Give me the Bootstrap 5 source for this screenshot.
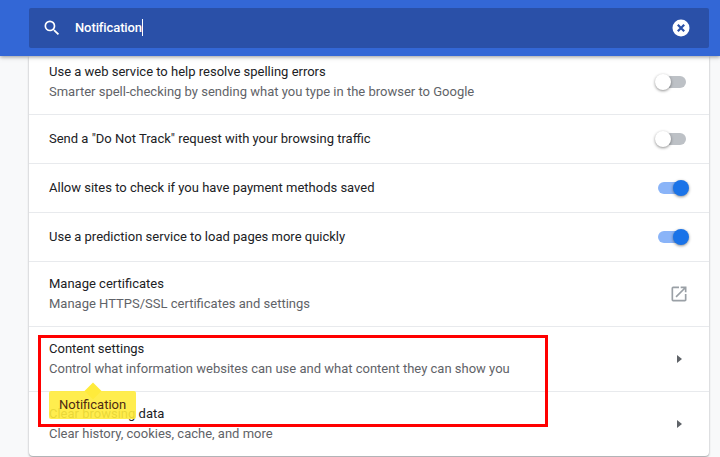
<!DOCTYPE html>
<html lang="en">
<head>
<meta charset="utf-8">
<title>Settings</title>
<link href="https://cdn.jsdelivr.net/npm/bootstrap@5.3.0/dist/css/bootstrap.min.css" rel="stylesheet">
<style>
html,body{height:457px;overflow:hidden}
body{background:#f8f9fa;font-family:Roboto,"Liberation Sans",sans-serif;font-size:13px;line-height:20px;color:#202124;position:relative}
.top-bar{height:56px;background:#3367d6;padding:8px 11px 8px 29px;box-shadow:0 1px 4px rgba(60,64,67,.55);position:relative;z-index:2}
.search-box{height:40px;background:#2a50a8;border-radius:2px;padding:0 19px 0 13px;color:#fff;font-weight:500}
.search-val{margin-left:13px;line-height:20px;letter-spacing:-.1px}
.caret-line{display:inline-block;width:1px;height:17px;background:#fff;vertical-align:-4px}
.panel{margin:0 11px 0 29px;height:400px;background:#fff;border-radius:0 0 4px 4px;box-shadow:0 1px 2px rgba(60,64,67,.5)}
.set-row{height:49px;padding:0 20px;border-bottom:1px solid #e8eaed}
.set-row.two{height:65px}
.set-row.first{height:59px;padding-bottom:7px;padding-top:0}
.set-row.last{border-bottom:0;height:64px}
.set-sub{color:#5f6368}
.tog{width:29px;height:12px;position:relative;margin-right:3px;border-radius:6px;background:#bdc1c6}
.tog::after{content:"";position:absolute;top:-2px;left:-2px;width:16px;height:16px;border-radius:50%;background:#fff;box-shadow:0 1px 3px rgba(0,0,0,.45)}
.tog.on{background:#8ab4f8;margin-right:2px}
.tog.on::after{left:15px;background:#1a73e8}
.act{width:20px;height:20px}
.red-frame{position:absolute;left:38px;top:335px;width:510px;height:92px;border:3px solid #f00;z-index:3}
.tip{position:absolute;left:49px;top:391px;width:87px;height:28px;background:rgba(255,235,59,.9);border-radius:2px;color:#4d2a12;padding:4px 0 0 10px;z-index:4}
.tip::before{content:"";position:absolute;left:38px;top:-6px;width:12px;height:12px;background:#ffeb3b;transform:rotate(45deg);z-index:-1}
</style>
</head>
<body>
<header class="top-bar">
  <div class="search-box d-flex align-items-center">
    <svg width="20" height="20" viewBox="0 0 24 24" fill="#fff" aria-hidden="true"><path d="M15.5 14h-.79l-.28-.27A6.47 6.47 0 0 0 16 9.5 6.5 6.5 0 1 0 9.5 16c1.61 0 3.09-.59 4.23-1.57l.27.28v.79l5 4.99L20.49 19l-4.99-5zm-6 0C7.01 14 5 11.99 5 9.5S7.01 5 9.5 5 14 7.01 14 9.5 11.99 14 9.5 14z"/></svg>
    <span class="search-val">Notification<span class="caret-line"></span></span>
    <svg class="ms-auto" width="18" height="18" viewBox="0 0 18 18" aria-hidden="true"><circle cx="9" cy="9" r="8.5" fill="#fff"/><path d="M5.8 5.8l6.4 6.4M12.2 5.8l-6.4 6.4" stroke="#2a50a8" stroke-width="2.2"/></svg>
  </div>
</header>
<main class="panel">
  <div class="set-row first d-flex align-items-center justify-content-between">
    <div><div>Use a web service to help resolve spelling errors</div><div class="set-sub">Smarter spell-checking by sending what you type in the browser to Google</div></div>
    <div class="tog"></div>
  </div>
  <div class="set-row d-flex align-items-center justify-content-between">
    <div>Send a "Do Not Track" request with your browsing traffic</div>
    <div class="tog"></div>
  </div>
  <div class="set-row d-flex align-items-center justify-content-between">
    <div>Allow sites to check if you have payment methods saved</div>
    <div class="tog on"></div>
  </div>
  <div class="set-row d-flex align-items-center justify-content-between">
    <div>Use a prediction service to load pages more quickly</div>
    <div class="tog on"></div>
  </div>
  <div class="set-row two d-flex align-items-center justify-content-between">
    <div><div>Manage certificates</div><div class="set-sub">Manage HTTPS/SSL certificates and settings</div></div>
    <svg width="20" height="20" viewBox="0 0 24 24" fill="#9aa0a6" aria-hidden="true"><path d="M19 19H5V5h7V3H5a2 2 0 0 0-2 2v14a2 2 0 0 0 2 2h14c1.1 0 2-.9 2-2v-7h-2v7zM14 3v2h3.59l-9.83 9.83 1.41 1.41L19 6.41V10h2V3h-7z"/></svg>
  </div>
  <div class="set-row two d-flex align-items-center justify-content-between">
    <div><div>Content settings</div><div class="set-sub">Control what information websites can use and what content they can show you</div></div>
    <svg class="act" viewBox="0 0 20 20" fill="#5f6368" aria-hidden="true"><path d="M8 6l5 4-5 4z"/></svg>
  </div>
  <div class="set-row two last d-flex align-items-center justify-content-between">
    <div><div>Clear browsing data</div><div class="set-sub">Clear history, cookies, cache, and more</div></div>
    <svg class="act" viewBox="0 0 20 20" fill="#5f6368" aria-hidden="true"><path d="M8 6l5 4-5 4z"/></svg>
  </div>
</main>
<div class="red-frame"></div>
<div class="tip">Notification</div>
<script src="https://cdn.jsdelivr.net/npm/bootstrap@5.3.0/dist/js/bootstrap.bundle.min.js"></script>
</body>
</html>
